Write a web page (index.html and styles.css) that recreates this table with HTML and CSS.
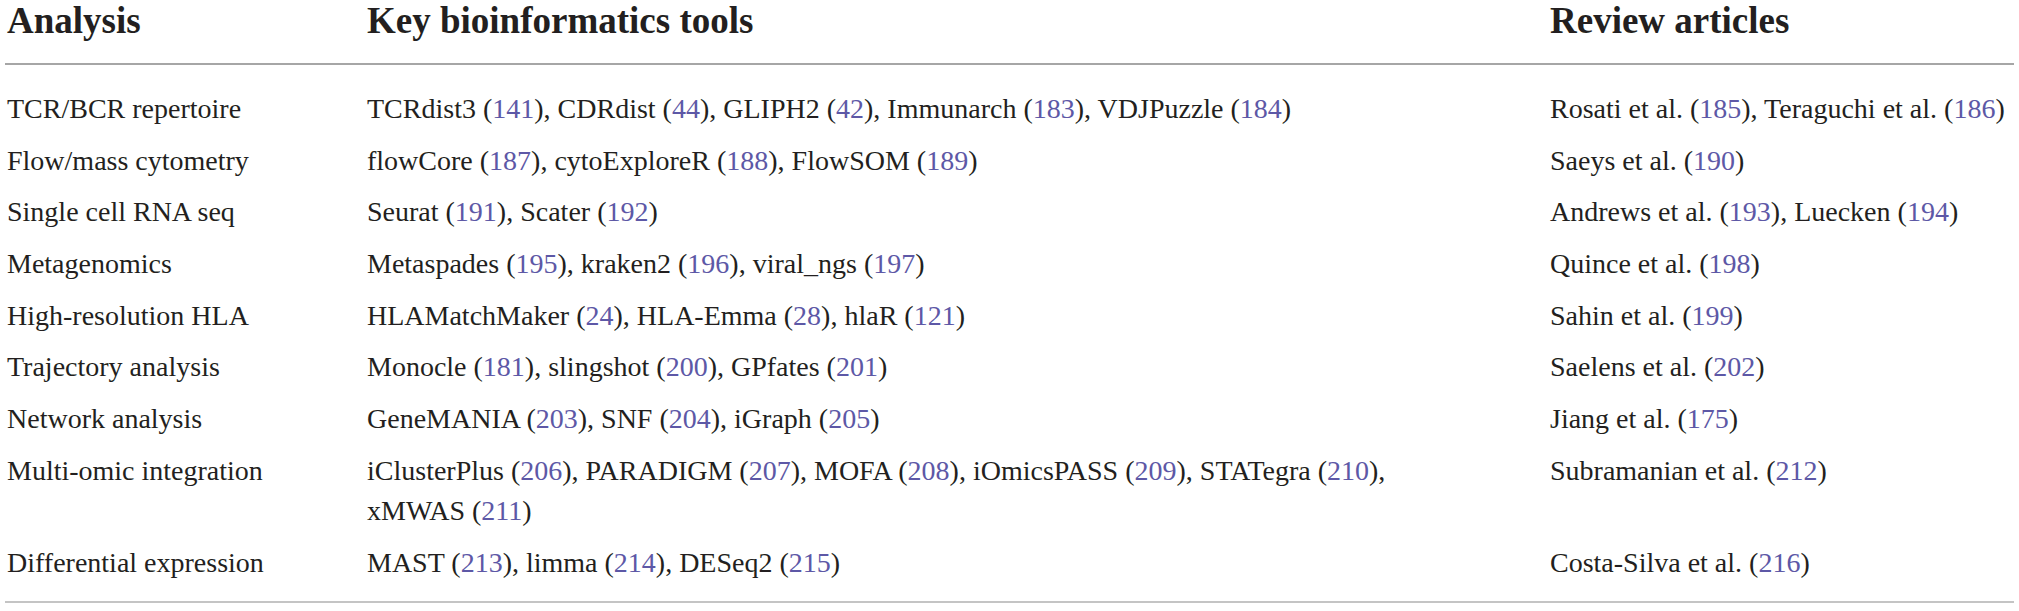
FILE: index.html
```html
<!DOCTYPE html>
<html lang="en">
<head>
<meta charset="utf-8">
<title>Key bioinformatics tools</title>
<link rel="stylesheet" href="styles.css">
</head>
<body>
<table class="tools">
  <colgroup>
    <col class="c-analysis">
    <col class="c-tools">
    <col class="c-reviews">
  </colgroup>
  <thead>
    <tr>
      <th>Analysis</th>
      <th>Key bioinformatics tools</th>
      <th>Review articles</th>
    </tr>
  </thead>
  <tbody>
    <tr>
      <td>TCR/BCR repertoire</td>
      <td>TCRdist3 (<a class="ref">141</a>), CDRdist (<a class="ref">44</a>), GLIPH2 (<a class="ref">42</a>), Immunarch (<a class="ref">183</a>), VDJPuzzle (<a class="ref">184</a>)</td>
      <td>Rosati et al. (<a class="ref">185</a>), Teraguchi et al. (<a class="ref">186</a>)</td>
    </tr>
    <tr>
      <td>Flow/mass cytometry</td>
      <td>flowCore (<a class="ref">187</a>), cytoExploreR (<a class="ref">188</a>), FlowSOM (<a class="ref">189</a>)</td>
      <td>Saeys et al. (<a class="ref">190</a>)</td>
    </tr>
    <tr>
      <td>Single cell RNA seq</td>
      <td>Seurat (<a class="ref">191</a>), Scater (<a class="ref">192</a>)</td>
      <td>Andrews et al. (<a class="ref">193</a>), Luecken (<a class="ref">194</a>)</td>
    </tr>
    <tr>
      <td>Metagenomics</td>
      <td>Metaspades (<a class="ref">195</a>), kraken2 (<a class="ref">196</a>), viral_ngs (<a class="ref">197</a>)</td>
      <td>Quince et al. (<a class="ref">198</a>)</td>
    </tr>
    <tr>
      <td>High-resolution HLA</td>
      <td>HLAMatchMaker (<a class="ref">24</a>), HLA-Emma (<a class="ref">28</a>), hlaR (<a class="ref">121</a>)</td>
      <td>Sahin et al. (<a class="ref">199</a>)</td>
    </tr>
    <tr>
      <td>Trajectory analysis</td>
      <td>Monocle (<a class="ref">181</a>), slingshot (<a class="ref">200</a>), GPfates (<a class="ref">201</a>)</td>
      <td>Saelens et al. (<a class="ref">202</a>)</td>
    </tr>
    <tr>
      <td>Network analysis</td>
      <td>GeneMANIA (<a class="ref">203</a>), SNF (<a class="ref">204</a>), iGraph (<a class="ref">205</a>)</td>
      <td>Jiang et al. (<a class="ref">175</a>)</td>
    </tr>
    <tr>
      <td>Multi-omic integration</td>
      <td>iClusterPlus (<a class="ref">206</a>), PARADIGM (<a class="ref">207</a>), MOFA (<a class="ref">208</a>), iOmicsPASS (<a class="ref">209</a>), STATegra (<a class="ref">210</a>),<br>xMWAS (<a class="ref">211</a>)</td>
      <td>Subramanian et al. (<a class="ref">212</a>)</td>
    </tr>
    <tr>
      <td>Differential expression</td>
      <td>MAST (<a class="ref">213</a>), limma (<a class="ref">214</a>), DESeq2 (<a class="ref">215</a>)</td>
      <td>Costa-Silva et al. (<a class="ref">216</a>)</td>
    </tr>
  </tbody>
</table>
</body>
</html>
```

FILE: styles.css
```css
html, body {
  margin: 0;
  padding: 0;
  background: #ffffff;
}

body {
  font-family: "Liberation Serif", "Times New Roman", serif;
  color: #231f20;
}

.tools {
  border-collapse: collapse;
  table-layout: fixed;
  width: 2009px;
  margin-left: 5px;
  border-bottom: 2px solid #c4c4c4;
}

.c-analysis { width: 360px; }
.c-tools { width: 1183px; }
.c-reviews { width: 466px; }

.tools th {
  font-weight: bold;
  font-size: 37px;
  line-height: 41px;
  text-align: left;
  vertical-align: top;
  padding: 0 0 22px 2px;
  border-bottom: 2px solid #a6a6a6;
  white-space: nowrap;
}

.tools td {
  font-size: 28px;
  line-height: 40px;
  vertical-align: top;
  padding: 6px 0 5.7px 2px;
  white-space: nowrap;
}

.tools tbody tr:first-child td {
  padding-top: 24px;
}

.tools tbody tr:last-child td {
  padding-bottom: 18px;
}

.ref {
  color: #5d58a6;
  text-decoration: none;
}
```
